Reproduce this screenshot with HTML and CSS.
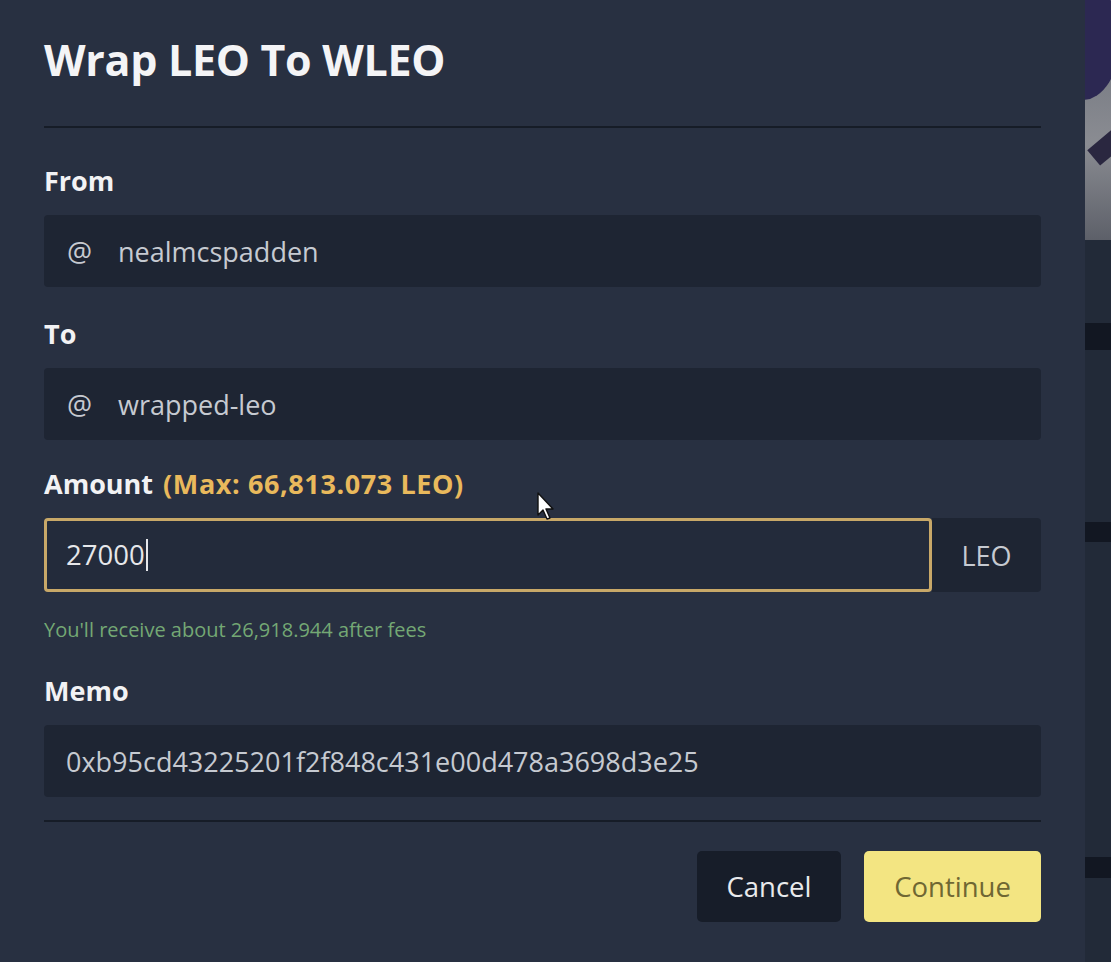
FILE: index.html
```html
<!DOCTYPE html>
<html>
<head>
    <title>Wrap LEO To WLEO</title>
    <link rel="stylesheet" href="styles.css">
</head>
<body>
    <div class="screen">
        <div class="modal">
            <div class="modal-header">
                <h1>Wrap LEO To WLEO</h1>
            </div>

            <div class="modal-body">
                <div class="field field-from">
                    <label>From</label>
                    <div class="input-box">
                        <span class="at">@</span>
                        <span class="value">nealmcspadden</span>
                    </div>
                </div>

                <div class="field">
                    <label>To</label>
                    <div class="input-box">
                        <span class="at">@</span>
                        <span class="value">wrapped-leo</span>
                    </div>
                </div>

                <div class="field field-amount">
                    <label>Amount <span class="max">(Max: 66,813.073 LEO)</span></label>
                    <div class="input-group">
                        <div class="input-box focused">
                            <span class="value typed">27000</span>
                        </div>
                        <div class="addon">LEO</div>
                    </div>
                    <p class="hint">You'll receive about 26,918.944 after fees</p>
                </div>

                <div class="field">
                    <label>Memo</label>
                    <div class="input-box">
                        <span class="value">0xb95cd43225201f2f848c431e00d478a3698d3e25</span>
                    </div>
                </div>
            </div>

            <div class="modal-footer">
                <button class="btn btn-cancel">Cancel</button>
                <button class="btn btn-continue">Continue</button>
            </div>

            <!-- mouse pointer from the recording -->
            <svg class="pointer" width="20" height="30" viewBox="0 0 20 30">
                <path d="M1 1 L1 23 L6 18 L10 27 L13 26 L9 17 L16 17 Z" fill="#ffffff" stroke="#111" stroke-width="1.4" stroke-linejoin="round"/>
            </svg>
        </div>

        <div class="backdrop">
            <div class="backdrop-image">
                <div class="blob"></div>
                <div class="wedge"></div>
            </div>
            <div class="backdrop-bar bar-1"></div>
            <div class="backdrop-bar bar-2"></div>
            <div class="backdrop-bar bar-3"></div>
        </div>
    </div>
</body>
</html>
```

FILE: styles.css
```css
* {
    box-sizing: border-box;
}

body {
    margin: 0;
    background-color: #1f2634;
    font-family: "Open Sans", "Noto Sans", sans-serif;
}

.screen {
    display: flex;
    width: 1111px;
    height: 962px;
    overflow: hidden;
}

/* Modal */
.modal {
    position: relative;
    width: 1085px;
    flex-shrink: 0;
    height: 962px;
    padding: 0 44px;
    background-color: #283041;
}

.modal-header {
    height: 128px;
    padding-top: 30px;
    border-bottom: 2px solid #161c27;
}

.modal-header h1 {
    margin: 0;
    font-size: 43px;
    font-weight: 700;
    line-height: 60px;
    color: #f4f4f6;
    letter-spacing: -0.3px;
}

.modal-body {
    padding-top: 35px;
}

.field {
    margin-bottom: 26px;
}

.field-from {
    margin-bottom: 29px;
}

.field label {
    display: block;
    margin-bottom: 16px;
    font-size: 27px;
    font-weight: 700;
    line-height: 36px;
    color: #f2f2f4;
}

.field .max {
    margin-left: 3px;
    color: #e9b95c;
    letter-spacing: 0.6px;
}

.input-box {
    display: flex;
    align-items: center;
    height: 72px;
    padding: 0 22px;
    background-color: #1e2533;
    border-radius: 4px;
    font-size: 27px;
    color: #c6cad1;
}

.input-box .at {
    width: 51px;
    font-size: 28px;
    margin-left: 1px;
}

.input-group {
    display: flex;
    height: 74px;
}

.input-group .input-box {
    flex: 1;
    height: 74px;
}

.input-box.focused {
    background-color: #232b3b;
    border: 3px solid #c8a868;
    border-radius: 4px;
    padding-left: 19px;
    font-size: 27.5px;
    color: #e6e7ea;
}

.typed {
    border-right: 2px solid #e6e7ea;
    padding-right: 1px;
    line-height: 32px;
}

.addon {
    display: flex;
    align-items: center;
    justify-content: center;
    width: 109px;
    background-color: #1e2533;
    border-radius: 0 4px 4px 0;
    font-size: 27px;
    color: #c6cad1;
}

.hint {
    margin: 24px 0 0 0;
    font-size: 20px;
    line-height: 27px;
    color: #74a874;
}

.field-amount {
    margin-bottom: 30px;
}

/* Footer */
.modal-footer {
    display: flex;
    justify-content: flex-end;
    gap: 23px;
    margin-top: -3px;
    padding-top: 29px;
    border-top: 2px solid #161c27;
}

.btn {
    height: 71px;
    border: none;
    border-radius: 5px;
    font-family: "Open Sans", "Noto Sans", sans-serif;
    font-size: 27.5px;
}

.btn-cancel {
    width: 144px;
    background-color: #171d29;
    color: #e9eaec;
}

.btn-continue {
    width: 177px;
    background-color: #f3e582;
    color: #6f6733;
}

.pointer {
    position: absolute;
    left: 537px;
    top: 492px;
}

/* Page behind the modal */
.backdrop {
    flex: 1;
    display: flex;
    flex-direction: column;
    background-color: #222a38;
}

.backdrop-image {
    position: relative;
    height: 240px;
    background: linear-gradient(180deg, #6b6f79 0%, #8a8c92 60%, #5d6069 100%);
    overflow: hidden;
}

.blob {
    position: absolute;
    left: -40px;
    top: -20px;
    width: 75px;
    height: 120px;
    border-radius: 50%;
    background-color: #2c2852;
}

.wedge {
    position: absolute;
    left: 4px;
    top: 135px;
    width: 40px;
    height: 20px;
    background-color: #2a2740;
    transform: rotate(-40deg);
}

.backdrop-bar {
    background-color: #121722;
}

.bar-1 {
    margin-top: 83px;
    height: 27px;
}

.bar-2 {
    margin-top: 172px;
    height: 20px;
}

.bar-3 {
    margin-top: 315px;
    height: 21px;
}
```
